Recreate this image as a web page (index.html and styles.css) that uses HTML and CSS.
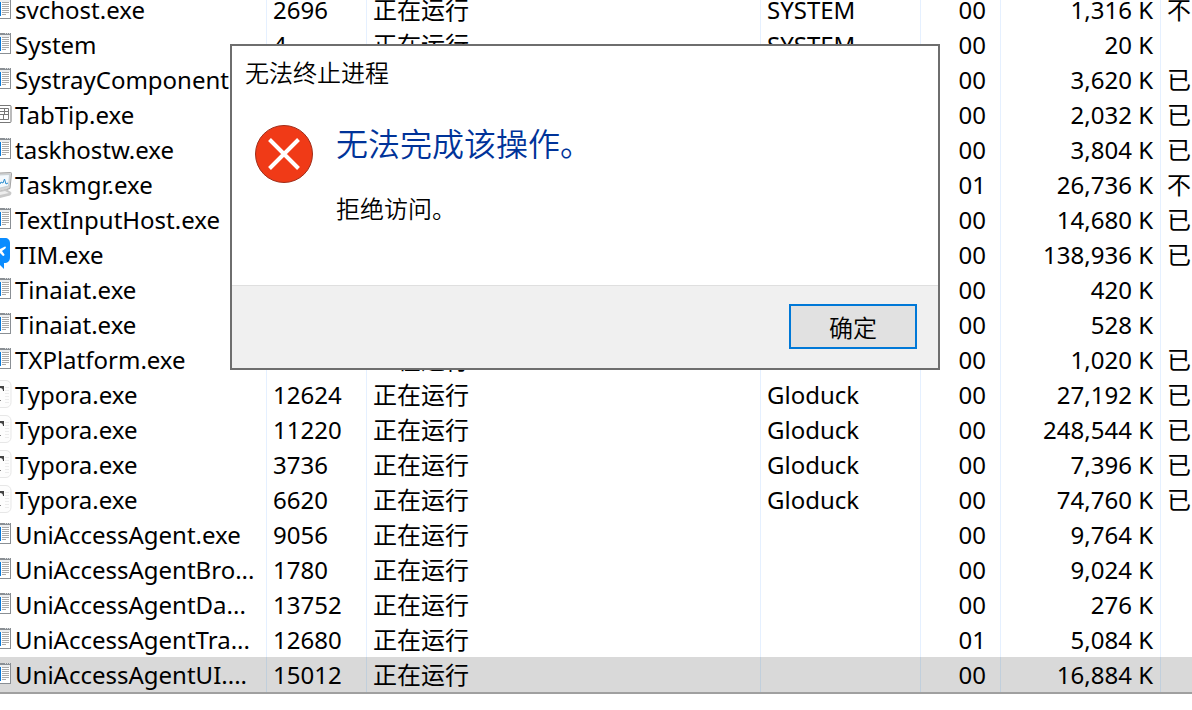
FILE: index.html
```html
<!DOCTYPE html>
<html lang="zh-CN">
<head>
<meta charset="utf-8">
<title>任务管理器</title>
<link rel="stylesheet" href="styles.css">
</head>
<body>
<svg class="sprites" aria-hidden="true">
  <symbol id="app" viewBox="0 -3 12 33">
    <path fill="#fff" d="M0 3h11v21H0z"/>
    <path fill="#8a8f94" d="M0 3h11v2H0zM10 3h1v21h-1zM0 23h11v1H0z"/>
    <path fill="#d8dbde" d="M5 3h1v1H5zM7 3h1v1H7zM9 3h1v1H9z"/>
    <path fill="#eceef0" d="M0 5h10v2H0z"/>
    <path fill="#0a78d7" d="M0 7h1v14H0z"/>
    <path stroke="#949494" stroke-width=".8" d="M2 7.500h7M2 9.500h7M2 11.500h7M2 13.500h7M2 15.500h7M2 17.500h7M2 19.500h4"/>
  </symbol>
  <symbol id="grid" viewBox="0 -3 12 33">
    <path fill="#fff" stroke="#777" d="M0 5.500h10a1 1 0 0 1 1 1v15a1 1 0 0 1-1 1H0"/>
    <path fill="none" stroke="#777" d="M0 8.500h8.500v11H0M4.500 8.500v6M3.500 14.500v5M0 11.500h8M0 14.500h8"/>
  </symbol>
  <symbol id="monitor" viewBox="0 -3 12 33">
    <path fill="#d6d6d6" stroke="#a4a4a4" d="M0 3l10.500-.5c1 0 1.200.5 1 1.500L10 18.500 0 21.500"/>
    <path fill="#f4f9fd" stroke="#bcc5cc" stroke-width=".7" d="M0 5l9.500-.5L8.500 16 0 18"/>
    <path fill="none" stroke="#2b8ed0" d="M0 14l1-2 2 1 1.500-4L6 14l2-1"/>
    <path fill="#c9c9c9" d="M0 21l6-2 5 3c1 1 0 3-1 3.500L0 28l-1-3z"/>
    <path fill="#eee" d="M0 22l5-1 4 2-9 2z"/>
  </symbol>
  <symbol id="tim" viewBox="0 0 12 33">
    <path fill="#0a8cff" d="M0 1h5c3 0 5 2 5 5v14c0 4-2 6-6 6v6L0 28z"/>
    <path fill="#fff" d="M0 12l5-2.500c1.500 0 1 2-.2 2.500L2 14l2.500 3.500C4.500 19 3 19.500 2 18L0 16z"/>
  </symbol>
  <symbol id="typora" viewBox="0 -2 12 33">
    <path fill="#fdfdfd" stroke="#e7e7e7" d="M0 1.500h6a5 5 0 0 1 5 5v17a5 5 0 0 1-5 5H0"/>
    <path fill="#444" d="M0 7h4v5H3c0-2-1-3-3-3z"/>
    <path fill="#888" d="M0 21h1v1H0z"/>
    <path stroke="#ececec" d="M5 8.500h4M5 11.500h4M5 14.500h4M5 17.500h4M5 20.500h4M5 23.500h4"/>
  </symbol>
</svg>

<main class="desktop">
  <table class="processes">
    <colgroup>
      <col class="c-name"><col class="c-pid"><col class="c-state"><col class="c-user"><col class="c-cpu"><col class="c-mem"><col class="c-uac">
    </colgroup>
    <tbody>
      <tr><td><svg><use href="#app"/></svg>svchost.exe</td><td>2696</td><td>正在运行</td><td>SYSTEM</td><td>00</td><td>1,316 K</td><td>不</td></tr>
      <tr><td><svg><use href="#app"/></svg>System</td><td>4</td><td>正在运行</td><td>SYSTEM</td><td>00</td><td>20 K</td><td></td></tr>
      <tr><td><svg><use href="#app"/></svg>SystrayComponent</td><td></td><td></td><td></td><td>00</td><td>3,620 K</td><td>已</td></tr>
      <tr><td><svg><use href="#grid"/></svg>TabTip.exe</td><td></td><td></td><td></td><td>00</td><td>2,032 K</td><td>已</td></tr>
      <tr><td><svg><use href="#app"/></svg>taskhostw.exe</td><td></td><td></td><td></td><td>00</td><td>3,804 K</td><td>已</td></tr>
      <tr><td><svg><use href="#monitor"/></svg>Taskmgr.exe</td><td></td><td></td><td></td><td>01</td><td>26,736 K</td><td>不</td></tr>
      <tr><td><svg><use href="#app"/></svg>TextInputHost.exe</td><td></td><td></td><td></td><td>00</td><td>14,680 K</td><td>已</td></tr>
      <tr><td><svg><use href="#tim"/></svg>TIM.exe</td><td></td><td></td><td></td><td>00</td><td>138,936 K</td><td>已</td></tr>
      <tr><td><svg><use href="#app"/></svg>Tinaiat.exe</td><td></td><td></td><td></td><td>00</td><td>420 K</td><td></td></tr>
      <tr><td><svg><use href="#app"/></svg>Tinaiat.exe</td><td></td><td></td><td></td><td>00</td><td>528 K</td><td></td></tr>
      <tr><td><svg><use href="#app"/></svg>TXPlatform.exe</td><td>9436</td><td>正在运行</td><td>Gloduck</td><td>00</td><td>1,020 K</td><td>已</td></tr>
      <tr><td><svg><use href="#typora"/></svg>Typora.exe</td><td>12624</td><td>正在运行</td><td>Gloduck</td><td>00</td><td>27,192 K</td><td>已</td></tr>
      <tr><td><svg><use href="#typora"/></svg>Typora.exe</td><td>11220</td><td>正在运行</td><td>Gloduck</td><td>00</td><td>248,544 K</td><td>已</td></tr>
      <tr><td><svg><use href="#typora"/></svg>Typora.exe</td><td>3736</td><td>正在运行</td><td>Gloduck</td><td>00</td><td>7,396 K</td><td>已</td></tr>
      <tr><td><svg><use href="#typora"/></svg>Typora.exe</td><td>6620</td><td>正在运行</td><td>Gloduck</td><td>00</td><td>74,760 K</td><td>已</td></tr>
      <tr><td><svg><use href="#app"/></svg>UniAccessAgent.exe</td><td>9056</td><td>正在运行</td><td></td><td>00</td><td>9,764 K</td><td></td></tr>
      <tr><td><svg><use href="#app"/></svg>UniAccessAgentBro...</td><td>1780</td><td>正在运行</td><td></td><td>00</td><td>9,024 K</td><td></td></tr>
      <tr><td><svg><use href="#app"/></svg>UniAccessAgentDa...</td><td>13752</td><td>正在运行</td><td></td><td>00</td><td>276 K</td><td></td></tr>
      <tr><td><svg><use href="#app"/></svg>UniAccessAgentTra...</td><td>12680</td><td>正在运行</td><td></td><td>01</td><td>5,084 K</td><td></td></tr>
      <tr class="selected"><td><svg><use href="#app"/></svg>UniAccessAgentUI....</td><td>15012</td><td>正在运行</td><td></td><td>00</td><td>16,884 K</td><td></td></tr>
    </tbody>
  </table>

  <section class="dialog" role="alertdialog" aria-labelledby="dialog-title" aria-describedby="dialog-text">
    <h1 class="dialog-title" id="dialog-title">无法终止进程</h1>
    <div class="dialog-body">
      <svg class="error-icon" viewBox="0 0 58 58" aria-hidden="true">
        <circle cx="29" cy="29" r="28.500" fill="#f03a17" stroke="#a12e1a"/>
        <path d="M14.500 14.500l29 29M43.500 14.500l-29 29" stroke="#fff" stroke-width="4"/>
      </svg>
      <div class="message">
        <h2 class="message-title">无法完成该操作。</h2>
        <p class="message-text" id="dialog-text">拒绝访问。</p>
      </div>
    </div>
    <footer class="dialog-footer"><button class="ok" type="button">确定</button></footer>
  </section>
</main>
</body>
</html>
```
FILE: styles.css
```css
* { box-sizing: border-box; }

body {
  margin: 0;
  background: #fff;
  color: #000;
  font-family: "Noto Sans", "Noto Sans CJK SC", sans-serif;
  font-size: 24px;
  overflow: hidden;
}

.sprites { display: none; }

.desktop { position: relative; min-height: 100vh; overflow: hidden; }

/* The list is scrolled part of a row down */
.processes {
  width: 100%;
  margin-top: -8px;
  border-collapse: separate;
  border-spacing: 0;
  table-layout: fixed;
  border-bottom: 2px solid #a0a0a0;
}

.c-name { width: 267px; }
.c-pid { width: 100px; }
.c-user { width: 160px; }
.c-cpu { width: 80px; }
.c-mem { width: 160px; }
.c-uac { width: 31px; }

td {
  height: 35px;
  padding: 0 6px;
  border-right: 1px solid #e5f0ff;
  line-height: 35px;
  white-space: nowrap;
  overflow: hidden;
  vertical-align: top;
}
td:first-child { padding: 0; }
td:nth-child(5) { padding-right: 14px; text-align: right; }
td:nth-child(6) { padding-right: 7px; text-align: right; }
td:last-child { border-right: 0; }

td svg {
  width: 12px;
  height: 33px;
  margin-right: 3px;
  vertical-align: top;
}

.selected td { background: #d9d9d9; border-right-color: #c1cfdc; }

.dialog {
  position: absolute;
  top: 44px;
  left: 230px;
  width: 710px;
  border: 2px solid #6e6e6e;
  background: #fff;
  font-family: "Noto Sans CJK SC", sans-serif;
  font-weight: 350;
}

.dialog-title { margin: 0; padding: 6px 13px; font-size: 24px; font-weight: inherit; line-height: 40px; }

.dialog-body { display: flex; gap: 23px; padding: 24px 24px 59px 23px; }
.error-icon { width: 58px; height: 58px; margin-top: 3px; flex: none; }
.message-title { margin: 0; color: #003399; font-size: 32px; font-weight: inherit; line-height: 40px; }
.message-text { margin: 28px 0 0; line-height: 36px; }

.dialog-footer {
  display: flex;
  justify-content: flex-end;
  padding: 18px 21px 19px;
  border-top: 1px solid #dfdfdf;
  background: #f0f0f0;
}
.ok {
  width: 128px;
  height: 45px;
  padding: 0;
  border: 2px solid #0078d7;
  background: #e1e1e1;
  color: #000;
  font: 350 24px "Noto Sans CJK SC", sans-serif;
}
```
